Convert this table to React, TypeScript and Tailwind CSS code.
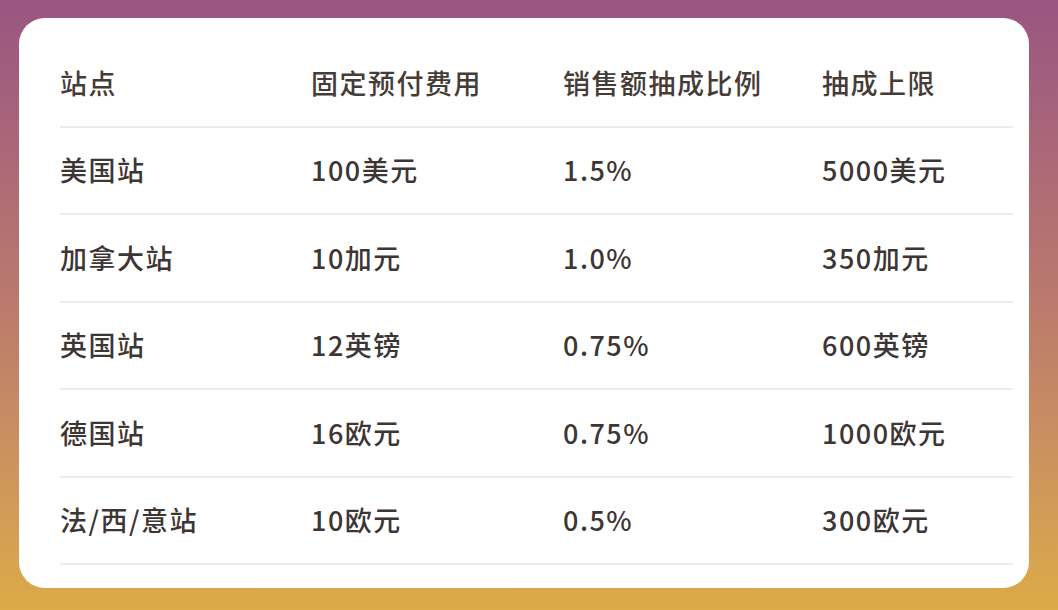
import type { JSX } from "react";

type Row = { site: string; fee: string; rate: string; cap: string };

const rows: Row[] = [
  { site: "美国站", fee: "100美元", rate: "1.5%", cap: "5000美元" },
  { site: "加拿大站", fee: "10加元", rate: "1.0%", cap: "350加元" },
  { site: "英国站", fee: "12英镑", rate: "0.75%", cap: "600英镑" },
  { site: "德国站", fee: "16欧元", rate: "0.75%", cap: "1000欧元" },
  { site: "法/西/意站", fee: "10欧元", rate: "0.5%", cap: "300欧元" },
];

const headers = ["站点", "固定预付费用", "销售额抽成比例", "抽成上限"];

const cols = "grid grid-cols-[251px_252px_259px_1fr] items-center h-[87.5px] border-b-2 border-[#ececec] text-[27px] font-medium tracking-[1.5px]";

export default function App(): JSX.Element {
  return (
    <div
      className="w-[1058px] h-[610px] bg-gradient-to-b from-[#9a5581] via-[#bb7a6c] to-[#dcab47] pl-[19px] pr-[29px] pt-[18px] pb-[22px]"
      style={{ fontFamily: '"Noto Sans CJK SC", "Noto Sans", sans-serif' }}
    >
      <div className="h-full bg-white rounded-[26px] pl-[41px] pr-[16px] pt-[22px]">
        {/* Header */}
        <div className={cols + " text-[#453c38]"}>
          {headers.map((h) => (
            <span key={h}>{h}</span>
          ))}
        </div>

        {/* Body */}
        {rows.map((r) => (
          <div key={r.site} className={cols + " text-[#3d3634]"}>
            <span>{r.site}</span>
            <span>{r.fee}</span>
            <span>{r.rate}</span>
            <span>{r.cap}</span>
          </div>
        ))}
      </div>
    </div>
  );
}
